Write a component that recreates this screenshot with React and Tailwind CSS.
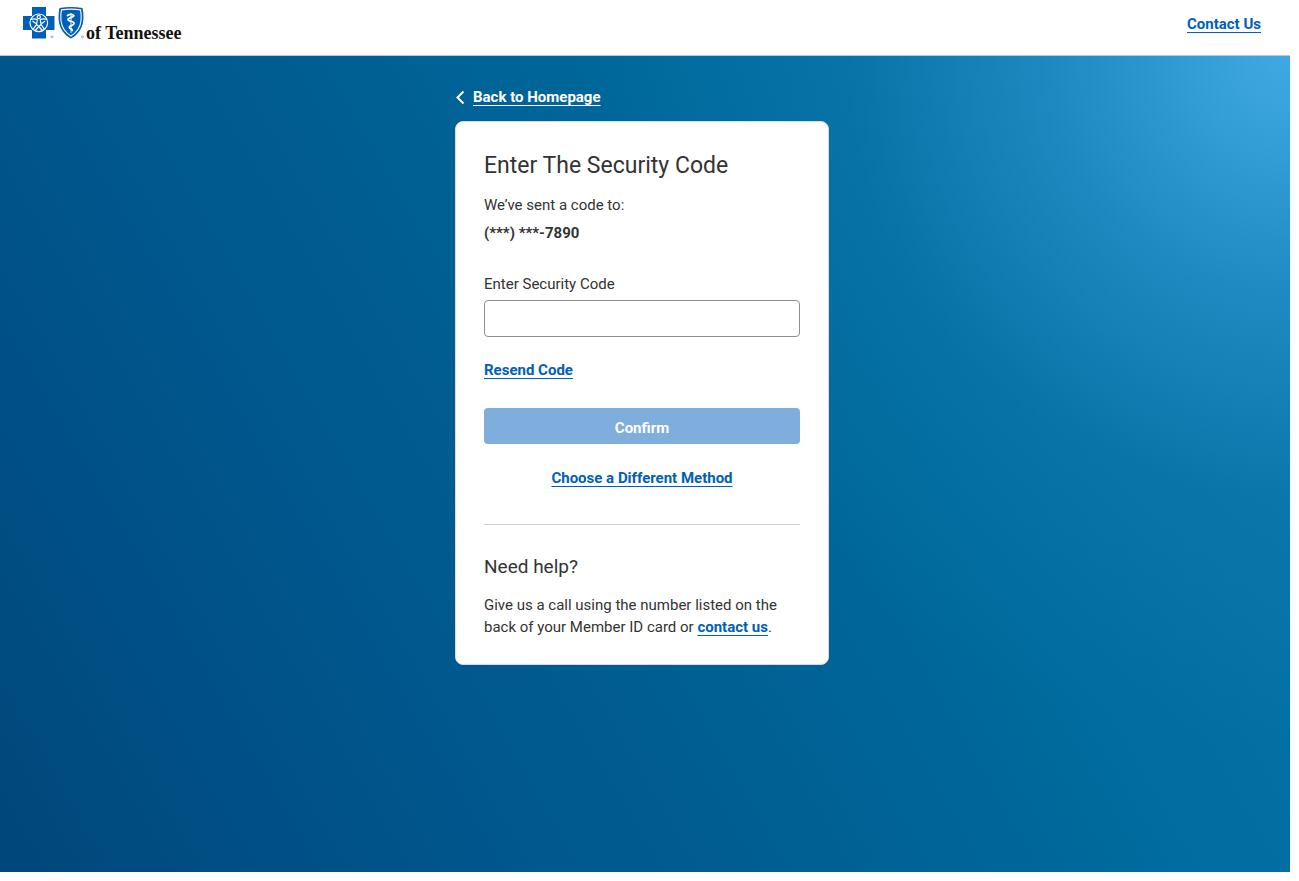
const linkLine = "font-bold underline decoration-1 underline-offset-3 [text-decoration-skip-ink:none]";

function BlueCross() {
  return (
    <svg viewBox="0 0 35 32" className="h-8 w-[35px]" aria-hidden="true">
      <path d="M9 0H23V9H31.500V23H23V31.500H9V23H0V9H9Z" fill="#0060b8" />
      <g fill="none" stroke="#fff" strokeWidth="1.200">
        <circle cx="15.800" cy="15.800" r="8.800" />
        <path d="M7.800 12.300Q12 11.200 14.300 12.800L13.500 17.500L10 22.300M23.800 12.300Q19.600 11.200 17.300 12.800L18.100 17.500L21.600 22.300M13.500 17.500L15.800 19.500L18.100 17.500M12.200 23.500L15.800 19.500L19.400 23.500M9.500 14L12.800 16.500M22.100 14L18.800 16.500" />
        <circle cx="15.800" cy="10" r="1.600" />
      </g>
      <circle cx="29" cy="29.800" r="1" fill="none" stroke="#5f9fd6" strokeWidth=".8" />
    </svg>
  );
}

function BlueShield() {
  return (
    <svg viewBox="0 0 28 32" className="h-8 w-7" aria-hidden="true">
      <path d="M1.500 1Q13 -.800 24.500 1Q26 7 25.200 14C24.300 22 19 28.500 13 31.600C7 28.500 1.700 22 .800 14Q0 7 1.500 1Z" fill="#0060b8" />
      <path d="M3.500 2.900Q13 1.300 22.500 2.900Q23.700 8 23 13.800C22.200 20.500 18 26 13 29C8 26 3.800 20.500 3 13.800Q2.300 8 3.500 2.900Z" fill="none" stroke="#fff" strokeWidth="1.100" />
      <path d="M13 6V26" stroke="#fff" strokeWidth=".9" />
      <path d="M9.500 8.600Q12.500 6.500 15.500 8.200C17.500 10 9.500 10.500 10 12.800C10.500 15 16.800 14 16 16.800C15.200 19 10.500 18.500 11.500 20.800C12 22 14.500 21.500 14.200 23.500" fill="none" stroke="#fff" strokeWidth="1.800" strokeLinecap="round" />
      <circle cx="24.500" cy="29.800" r="1" fill="none" stroke="#5f9fd6" strokeWidth=".8" />
    </svg>
  );
}

function Header() {
  return (
    <header className="flex h-14 items-start justify-between border-b border-[#b5c8d6] bg-white pl-[23px] pr-[29px]">
      <a href="#home" aria-label="BlueCross BlueShield of Tennessee" className="flex items-start pt-[7px]">
        <BlueCross />
        <BlueShield />
        <span className="pt-4 font-['Liberation_Serif',serif] text-[18px] leading-5 font-bold text-[#111]">of Tennessee</span>
      </a>
      <a href="#contact" className={`mt-[13px] text-[#0060b8] ${linkLine}`}>Contact Us</a>
    </header>
  );
}

function SecurityCard() {
  return (
    <form
      onSubmit={(e) => e.preventDefault()}
      className="flex flex-col rounded-lg border border-[#d5dde2] bg-white px-7 pt-7 pb-[26px]"
    >
      <h1 className="text-[23px] leading-8">Enter The Security Code</h1>
      <p className="mt-3">We’ve sent a code to:</p>
      <p className="mt-1.5 font-bold">(***) ***-7890</p>
      <label htmlFor="code" className="mt-[29px]">Enter Security Code</label>
      <input
        id="code"
        type="text"
        inputMode="numeric"
        className="mt-[5px] h-[37px] rounded border border-[#8f8f8f] bg-white px-3"
      />
      <a href="#resend" className={`mt-[22px] self-start text-[#0060b8] ${linkLine}`}>Resend Code</a>
      <button type="submit" disabled className="mt-[27px] h-9 rounded bg-[#7faddc] pt-1 font-bold text-white">Confirm</button>
      <a href="#method" className={`mt-[23px] self-center text-[#0060b8] ${linkLine}`}>Choose a Different Method</a>
      <hr className="mt-[35px] border-[#d0d0d0]" />
      <h2 className="mt-7 text-[19px] leading-7">Need help?</h2>
      <p className="mt-[13px]">
        Give us a call using the number listed on the back of your Member ID card or{" "}
        <a href="#contact" className={`text-[#0060b8] ${linkLine}`}>contact us</a>.
      </p>
    </form>
  );
}

export default function App() {
  return (
    <div className="flex min-h-screen flex-col bg-white pr-[9px] pb-[9px] font-[Roboto,sans-serif] text-[15px] leading-[22px] text-[#333]">
      <Header />
      <main className="flex flex-1 justify-center bg-[radial-gradient(circle_at_100%_0%,#40a9e1_0%,rgba(43,150,207,0.6)_16%,rgba(20,125,177,0.28)_29%,rgba(0,110,160,0)_45%),linear-gradient(60deg,#00477b_0%,#00568c_28%,#006094_48%,#006c9f_68%,#0c7aae_100%)] pr-1.5 pt-[30px]">
        <div className="w-full max-w-[374px]">
          <a href="#home" className="flex w-fit items-center text-white">
            <svg viewBox="0 0 18 22" className="h-[22px] w-[18px]" fill="none" stroke="currentColor" strokeWidth="2" aria-hidden="true">
              <path d="M8.500 5.500L2.500 11.500L8.500 17.500" />
            </svg>
            <span className={linkLine}>Back to Homepage</span>
          </a>
          <div className="mt-[13px]">
            <SecurityCard />
          </div>
        </div>
      </main>
    </div>
  );
}
